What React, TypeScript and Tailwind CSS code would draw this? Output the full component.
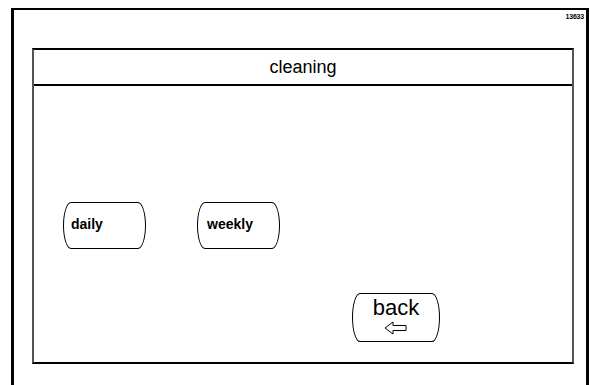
import { type ReactNode } from 'react';

function ShapeButton({ children, className }: { children: ReactNode; className: string }) {
  return (
    <button
      className={`border border-black bg-white rounded-[8px/50%] text-black flex ${className}`}
    >
      {children}
    </button>
  );
}

export default function App() {
  return (
    <div className="w-[590px] h-[385px] bg-white overflow-hidden" style={{ fontFamily: '"Liberation Sans", Arial, sans-serif' }}>
      <div className="mt-[8px] ml-[11px] w-[578px] h-[377px] border-t-[2px] border-x-[3px] border-black flex flex-col">
        <div className="h-[38px] flex justify-end pr-[2px] pt-[3px]">
          <span className="text-[7px] leading-[8px] font-bold tracking-[-0.2px]">13633</span>
        </div>

        <div className="ml-[18px] w-[542px] h-[316px] border-t-2 border-t-black border-l-2 border-l-[#555] border-r-2 border-r-[#555] border-b-2 border-b-black flex flex-col">
          <div className="h-[36px] border-b-2 border-black flex items-center justify-center">
            <span className="text-[18px] text-black">cleaning</span>
          </div>

          <div className="flex-1 flex flex-col pl-[29px] pt-[116px]">
            <div className="flex gap-[51px]">
              <ShapeButton className="w-[83px] h-[47px] items-center pl-[7px] pb-[2px]">
                <span className="text-[14px] font-bold">daily</span>
              </ShapeButton>
              <ShapeButton className="w-[83px] h-[47px] items-center pl-[9px] pb-[2px]">
                <span className="text-[14px] font-bold">weekly</span>
              </ShapeButton>
            </div>

            <div className="ml-[289px] mt-[44px]">
              <ShapeButton className="w-[88px] h-[49px] flex-col items-center pt-[3px]">
                <span className="text-[22px] leading-[22px]">back</span>
                <svg width="24" height="14" viewBox="0 0 24 14" className="mt-[2px]">
                  <path d="M1 7 L9 1 L9 4.5 L22 4.5 L22 9.5 L9 9.5 L9 13 Z" fill="none" stroke="black" strokeWidth="1" />
                </svg>
              </ShapeButton>
            </div>
          </div>
        </div>
      </div>
    </div>
  );
}
